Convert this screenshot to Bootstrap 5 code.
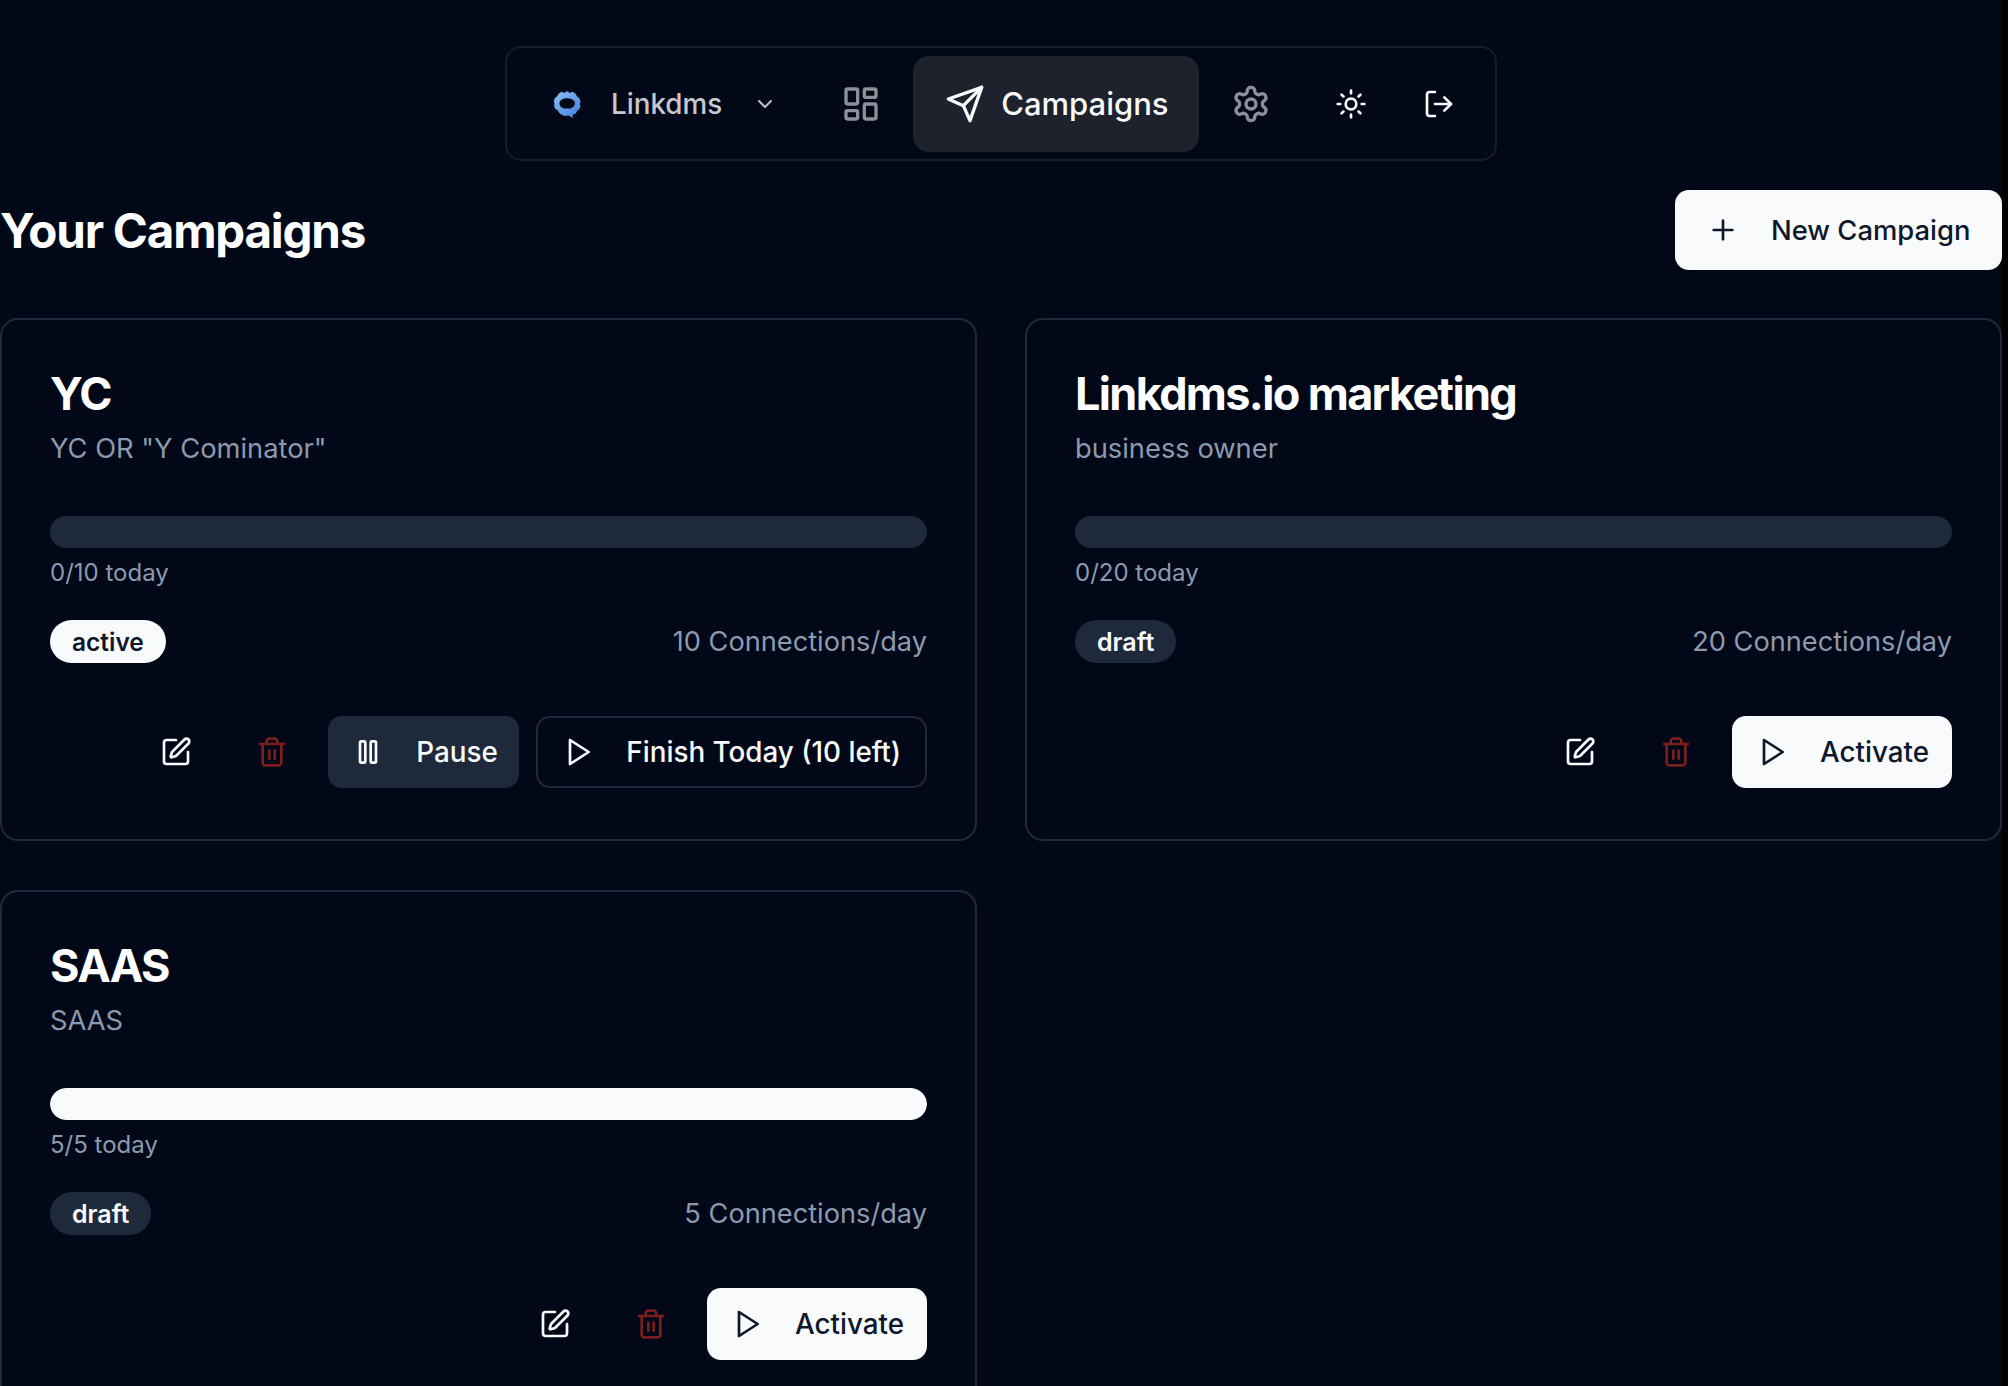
<!doctype html>
<html lang="en" data-bs-theme="dark">
<head>
<meta charset="utf-8">
<title>Your Campaigns</title>
<link href="https://cdn.jsdelivr.net/npm/bootstrap@5.3.0/dist/css/bootstrap.min.css" rel="stylesheet">
<style>
html{background:#000;height:100%;overflow:hidden}
body{background:#020817;height:100%;overflow:hidden;font-family:Inter,"Liberation Sans",sans-serif;color:#f8fafc;width:2002px}
svg.lu{fill:none;stroke:currentColor;stroke-width:2;stroke-linecap:round;stroke-linejoin:round;flex:none;display:block}
.i32{width:32px;height:32px}
.i40{width:40px;height:40px}
.topwrap{padding-top:46px;height:161px}
.topbar{border:2px solid #151c2c;border-radius:16px;height:115px;width:992px;padding:8px 16px 7px 14px;margin-left:505px}
.topitem{height:96px;padding:0 32px;border-radius:16px;color:#8d9097;gap:16px;font-size:27.8px;font-weight:500;text-decoration:none}
.topitem.brand{color:#c6c8ce;padding-right:32px;gap:0}
.brand .brand-name{margin:0 31px 0 30px;padding-top:2px}
.brand svg.chev{color:#bfc2c8;width:24px;height:24px}
.topitem.on{background:#1e222d;color:#f8fafc;font-size:31px;width:286px}
.topitem.bright{color:#f8fafc}
.topitem.narrow{padding:0 24px}
.headline{height:157px;padding-top:29px;align-items:flex-start}
.page-title{font-size:47.5px;font-weight:700;letter-spacing:-1.2px;line-height:82px;margin:0}
.btn.newbtn{background:#f8fafc;color:#0f172a;border:0;height:80px;width:327px;border-radius:14px;font-size:27.4px;font-weight:500;padding:2px 32px 0 32px;gap:32px;justify-content:flex-start;white-space:nowrap}
.newbtn svg{margin-top:-2px}
.cards{display:grid;grid-template-columns:977px 977px;column-gap:48px;row-gap:49px;align-items:start}
.card.camp{background:transparent;border:2px solid #1e293b;border-radius:18px;height:523px;padding:0;color:#f8fafc}
.camp .card-body{padding:46px 48px 0}
.camp-title{font-size:45px;font-weight:700;letter-spacing:-1.65px;line-height:56px;margin:0}
.camp-sub{font-size:27.3px;color:#8c9ab0;line-height:36px;margin-top:9px;height:36px}
.progress.bar-track{height:32px;border-radius:16px;background:#1e293b;margin-top:49px}
.bar-track .progress-bar{background:#f8fafc;border-radius:16px}
.today{font-size:24px;color:#8c9ab0;line-height:32px;margin-top:9px}
.infoline{height:43px;margin-top:31px}
.badge.state{font-size:24.5px;font-weight:600;height:43px;border-radius:22px;padding:2px 22px 0;display:flex;align-items:center;line-height:1}
.state.live{background:#f8fafc;color:#0f172a}
.state.idle{background:#1e293b;color:#f8fafc;font-size:25px}
.perday{font-size:27.2px;color:#8c9ab0;padding-top:2px}
.acts{height:72px;margin-top:53px;gap:17px}
.btn.act{height:72px;border-radius:14px;font-size:27.8px;font-weight:500;padding:0 24px;gap:32px;border:0;white-space:nowrap;color:#f8fafc;display:flex;align-items:center}
.btn.act span{padding-top:2px}
.btn.sq{width:78px;padding:0 2px 0 0;justify-content:center}
.btn.del{color:#7a1e1e;padding:0}
.btn.mute{background:#1e293b;width:191px}
.btn.lined{border:2px solid #1e293b;background:transparent}
.btn.solid{background:#f8fafc;color:#0f172a;width:220px}
</style>
</head>
<body>
<svg width="0" height="0" class="position-absolute">
<defs>
<linearGradient id="lg" x1="0" y1="0" x2="1" y2="1"><stop offset="0" stop-color="#8cc0f5"/><stop offset="1" stop-color="#3d7de0"/></linearGradient>
<symbol id="pen" viewBox="0 0 24 24"><path d="M12 3H5a2 2 0 0 0-2 2v14a2 2 0 0 0 2 2h14a2 2 0 0 0 2-2v-7"/><path d="M18.375 2.625a1 1 0 0 1 3 3l-9.013 9.014a2 2 0 0 1-.853.505l-2.873.84a.5.5 0 0 1-.62-.62l.84-2.873a2 2 0 0 1 .506-.852z"/></symbol>
<symbol id="trash" viewBox="0 0 24 24"><path d="M3 6h18"/><path d="M19 6v14c0 1-1 2-2 2H7c-1 0-2-1-2-2V6"/><path d="M8 6V4c0-1 1-2 2-2h4c1 0 2 1 2 2v2"/><line x1="10" x2="10" y1="11" y2="17"/><line x1="14" x2="14" y1="11" y2="17"/></symbol>
<symbol id="play" viewBox="0 0 24 24"><polygon points="6 3 20 12 6 21 6 3"/></symbol>
<symbol id="pause" viewBox="0 0 24 24"><rect x="6" y="4" width="4" height="16" rx="1"/><rect x="14" y="4" width="4" height="16" rx="1"/></symbol>
</defs>
</svg>
<div class="topwrap">
<nav class="topbar d-flex align-items-center">
  <a class="topitem brand d-flex align-items-center" href="#">
    <svg width="28" height="27" viewBox="0 0 28 27" class="flex-none"><path fill="url(#lg)" fill-rule="evenodd" d="M8.500.800 11.500 2 13 .5 15 .5 16.500 2 19.500.800 22.500 2.500 24 5.300 26.500 7.500 27.500 10.500 26.800 13 27.500 15.500 26 18.500 23.800 20.300 23 22.500 20 23.500 19.500 27 15.800 24.500 12.500 25 9 24 6.300 22 5 19.800 2.300 17.800 1 15 1.500 12.500.700 9.800 2 7 4.200 5.300 5.800 2.500zM13.800 7.200c-4.300 0-7.300 2.200-7.300 5.200 0 3 2.800 5.200 6.500 5.200h4.800l2.300-1.700c1.200-1 1.900-2.200 1.900-3.500 0-3-3.400-5.200-8.200-5.200z"/></svg>
    <span class="brand-name">Linkdms</span>
    <svg class="lu chev" viewBox="0 0 24 24"><path d="m6 9 6 6 6-6"/></svg>
  </a>
  <a class="topitem d-flex align-items-center" href="#" aria-label="Dashboard">
    <svg class="lu i40" viewBox="0 0 24 24"><rect width="7" height="9" x="3" y="3" rx="1"/><rect width="7" height="5" x="14" y="3" rx="1"/><rect width="7" height="9" x="14" y="12" rx="1"/><rect width="7" height="5" x="3" y="16" rx="1"/></svg>
  </a>
  <a class="topitem on d-flex align-items-center" href="#">
    <svg class="lu i40" viewBox="0 0 24 24"><path d="m22 2-7 20-4-9-9-4Z"/><path d="M22 2 11 13"/></svg>
    <span>Campaigns</span>
  </a>
  <a class="topitem d-flex align-items-center" href="#" aria-label="Settings">
    <svg class="lu i40" viewBox="0 0 24 24"><path d="M12.220 2h-.44a2 2 0 0 0-2 2v.18a2 2 0 0 1-1 1.730l-.43.250a2 2 0 0 1-2 0l-.150-.080a2 2 0 0 0-2.730.730l-.220.380a2 2 0 0 0 .730 2.730l.150.100a2 2 0 0 1 1 1.720v.510a2 2 0 0 1-1 1.740l-.150.090a2 2 0 0 0-.730 2.730l.220.380a2 2 0 0 0 2.730.730l.150-.080a2 2 0 0 1 2 0l.430.250a2 2 0 0 1 1 1.730V20a2 2 0 0 0 2 2h.44a2 2 0 0 0 2-2v-.18a2 2 0 0 1 1-1.730l.430-.250a2 2 0 0 1 2 0l.150.080a2 2 0 0 0 2.730-.730l.220-.390a2 2 0 0 0-.730-2.730l-.150-.080a2 2 0 0 1-1-1.740v-.500a2 2 0 0 1 1-1.740l.150-.090a2 2 0 0 0 .730-2.730l-.220-.380a2 2 0 0 0-2.730-.730l-.150.080a2 2 0 0 1-2 0l-.430-.250a2 2 0 0 1-1-1.730V4a2 2 0 0 0-2-2z"/><circle cx="12" cy="12" r="3"/></svg>
  </a>
  <a class="topitem bright d-flex align-items-center" href="#" aria-label="Theme">
    <svg class="lu i32" viewBox="0 0 24 24"><circle cx="12" cy="12" r="4"/><path d="M12 2v2"/><path d="M12 20v2"/><path d="m4.930 4.930 1.410 1.410"/><path d="m17.660 17.660 1.410 1.410"/><path d="M2 12h2"/><path d="M20 12h2"/><path d="m6.340 17.660-1.410 1.410"/><path d="m19.070 4.930-1.410 1.410"/></svg>
  </a>
  <a class="topitem bright narrow d-flex align-items-center" href="#" aria-label="Log out">
    <svg class="lu i32" viewBox="0 0 24 24"><path d="M9 21H5a2 2 0 0 1-2-2V5a2 2 0 0 1 2-2h4"/><polyline points="16 17 21 12 16 7"/><line x1="21" x2="9" y1="12" y2="12"/></svg>
  </a>
</nav>
</div>
<div class="headline d-flex justify-content-between">
  <h1 class="page-title">Your Campaigns</h1>
  <button class="btn newbtn d-flex align-items-center"><svg class="lu i32" viewBox="0 0 24 24"><path d="M5 12h14"/><path d="M12 5v14"/></svg><span>New Campaign</span></button>
</div>
<div class="cards">
  <div class="card camp"><div class="card-body">
    <h3 class="camp-title">YC</h3>
    <div class="camp-sub">YC OR "Y Cominator"</div>
    <div class="progress bar-track"></div>
    <div class="today">0/10 today</div>
    <div class="infoline d-flex justify-content-between align-items-center"><span class="badge state live">active</span><span class="perday">10 Connections/day</span></div>
    <div class="acts d-flex justify-content-end">
      <button class="btn act sq"><svg class="lu i32"><use href="#pen"/></svg></button>
      <button class="btn act sq del"><svg class="lu i32"><use href="#trash"/></svg></button>
      <button class="btn act mute"><svg class="lu i32"><use href="#pause"/></svg><span>Pause</span></button>
      <button class="btn act lined"><svg class="lu i32"><use href="#play"/></svg><span>Finish Today (10 left)</span></button>
    </div>
  </div></div>
  <div class="card camp"><div class="card-body">
    <h3 class="camp-title">Linkdms.io marketing</h3>
    <div class="camp-sub">business owner</div>
    <div class="progress bar-track"></div>
    <div class="today">0/20 today</div>
    <div class="infoline d-flex justify-content-between align-items-center"><span class="badge state idle">draft</span><span class="perday">20 Connections/day</span></div>
    <div class="acts d-flex justify-content-end">
      <button class="btn act sq"><svg class="lu i32"><use href="#pen"/></svg></button>
      <button class="btn act sq del"><svg class="lu i32"><use href="#trash"/></svg></button>
      <button class="btn act solid"><svg class="lu i32"><use href="#play"/></svg><span>Activate</span></button>
    </div>
  </div></div>
  <div class="card camp"><div class="card-body">
    <h3 class="camp-title">SAAS</h3>
    <div class="camp-sub">SAAS</div>
    <div class="progress bar-track"><div class="progress-bar" style="width:100%"></div></div>
    <div class="today">5/5 today</div>
    <div class="infoline d-flex justify-content-between align-items-center"><span class="badge state idle">draft</span><span class="perday">5 Connections/day</span></div>
    <div class="acts d-flex justify-content-end">
      <button class="btn act sq"><svg class="lu i32"><use href="#pen"/></svg></button>
      <button class="btn act sq del"><svg class="lu i32"><use href="#trash"/></svg></button>
      <button class="btn act solid"><svg class="lu i32"><use href="#play"/></svg><span>Activate</span></button>
    </div>
  </div></div>
</div>
<script src="https://cdn.jsdelivr.net/npm/bootstrap@5.3.0/dist/js/bootstrap.bundle.min.js"></script>
</body>
</html>
